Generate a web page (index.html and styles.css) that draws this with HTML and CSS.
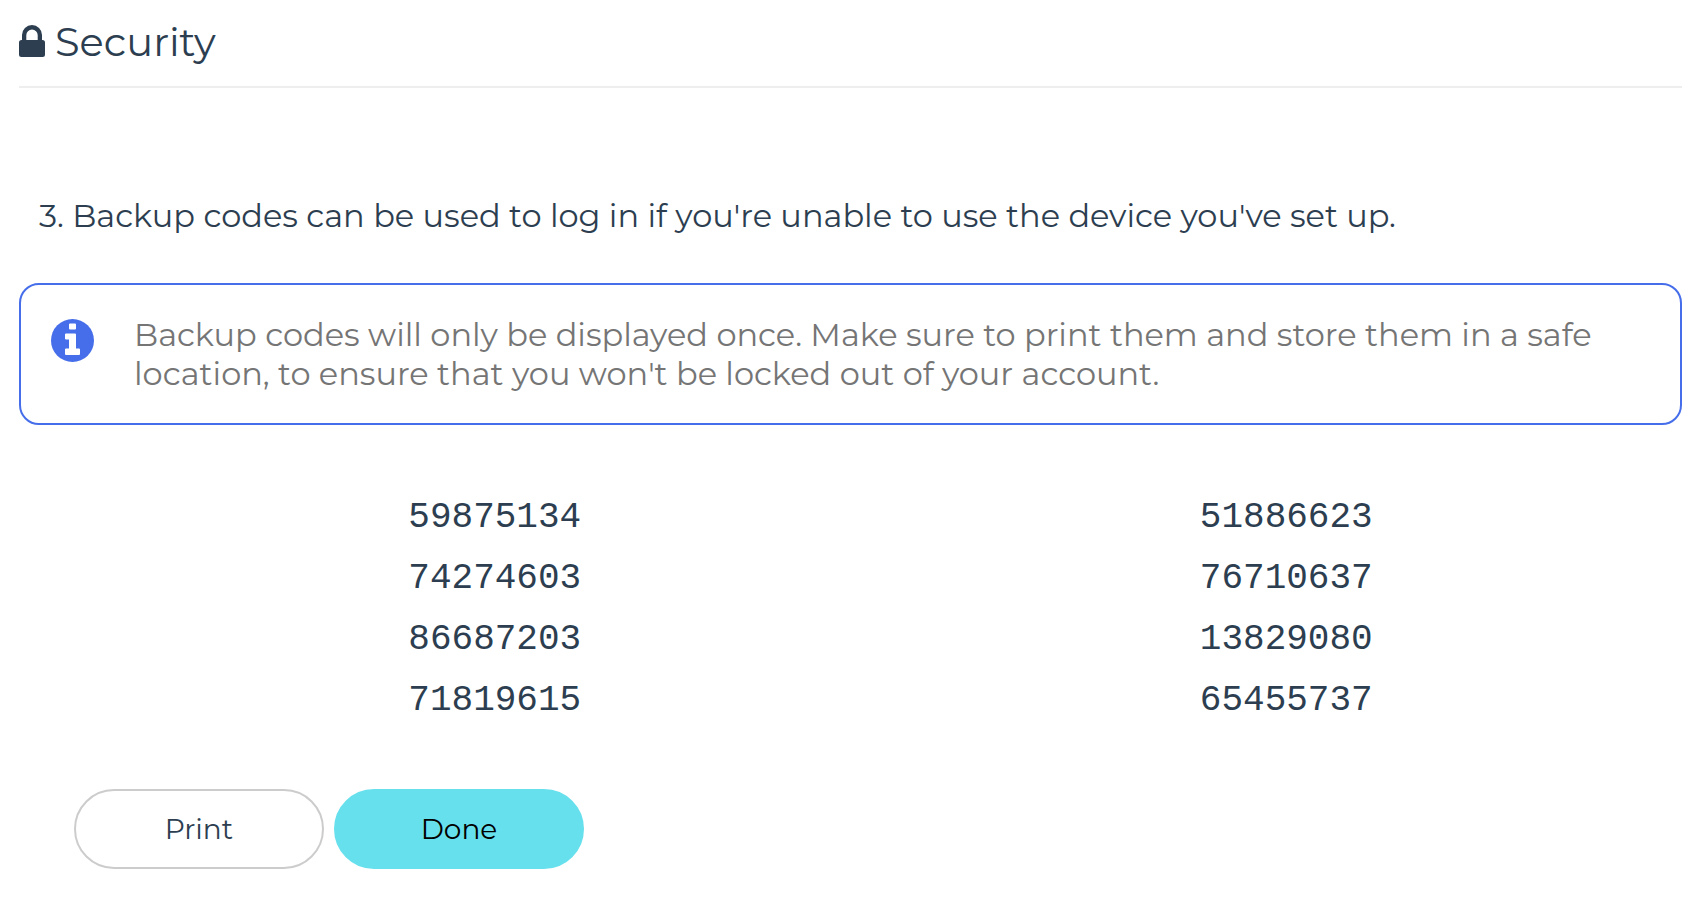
FILE: index.html
```html
<!DOCTYPE html>
<html lang="en">
<head>
<meta charset="utf-8">
<meta name="viewport" content="width=device-width, initial-scale=1">
<title>Security</title>
<link rel="stylesheet" href="styles.css">
</head>
<body>
<main class="page">
  <header class="page-header">
    <svg class="lock-icon" viewBox="0 0 26 32" aria-hidden="true">
      <path d="M3 15V10a10 10 0 0 1 20 0v5h.5A2.500 2.500 0 0 1 26 17.500v12A2.500 2.500 0 0 1 23.500 32h-21A2.500 2.500 0 0 1 0 29.500v-12A2.500 2.500 0 0 1 2.500 15zm4.300 0h11.400v-4.800a5.700 5.700 0 0 0-11.400 0z"/>
    </svg>
    <h1 class="page-title">Security</h1>
  </header>
  <p class="step">3. Backup codes can be used to log in if you're unable to use the device you've set up.</p>
  <section class="notice">
    <svg class="info-icon" viewBox="0 0 43 43" aria-hidden="true">
      <circle class="info-disc" cx="21.500" cy="21.500" r="21.500"/>
      <path class="info-mark" d="M19 4.500h5a1 1 0 0 1 1 1v4a1 1 0 0 1-1 1h-5a1 1 0 0 1-1-1v-4a1 1 0 0 1 1-1zM15 14.500h9a1 1 0 0 1 1 1v14h3a1 1 0 0 1 1 1v4.500a1 1 0 0 1-1 1H15a1 1 0 0 1-1-1v-4.500a1 1 0 0 1 1-1h3v-9h-3a1 1 0 0 1-1-1v-4a1 1 0 0 1 1-1z"/>
    </svg>
    <p class="notice-text">Backup codes will only be displayed once. Make sure to print them and store them in a safe location, to ensure that you won't be locked out of your account.</p>
  </section>
  <ul class="codes">
    <li>59875134</li>
    <li>51886623</li>
    <li>74274603</li>
    <li>76710637</li>
    <li>86687203</li>
    <li>13829080</li>
    <li>71819615</li>
    <li>65455737</li>
  </ul>
  <div class="actions">
    <button class="button" type="button">Print</button>
    <button class="button button-primary" type="button">Done</button>
  </div>
</main>
</body>
</html>
```
FILE: styles.css
```css
* {
  box-sizing: border-box;
}

body {
  margin: 0;
  background: #fff;
  color: #2c3e50;
  font-family: Montserrat, Inter, sans-serif;
  font-size: 32px;
  font-weight: 400;
  line-height: 39px;
}

.page {
  padding: 16px 20px 32px 19px;
}

.page-header {
  display: flex;
  align-items: center;
  gap: 10px;
  padding-bottom: 18px;
  border-bottom: 2px solid #eee;
}

.lock-icon {
  width: 26px;
  height: 32px;
  margin-bottom: 3px;
  fill: #2c3e50;
}

.page-title {
  margin: 0;
  font-size: 40px;
  font-weight: 400;
  line-height: 52px;
}

.step {
  margin: 108px 20px 48px;
}

.notice {
  display: flex;
  align-items: flex-start;
  gap: 40px;
  padding: 30px;
  border: 2px solid #466eea;
  border-radius: 20px;
}

.info-icon {
  flex: none;
  width: 43px;
  height: 43px;
  margin-top: 4px;
}

.info-disc {
  fill: #466eea;
}

.info-mark {
  fill: #fff;
}

.notice-text {
  margin: 0;
  color: #757575;
}

.codes {
  display: grid;
  grid-template-columns: 1fr 1fr;
  margin: 62px 0 0;
  padding: 0 0 0 80px;
  list-style: none;
  font-family: "Liberation Mono", monospace;
  font-size: 36px;
  line-height: 61px;
  text-align: center;
}

.actions {
  display: flex;
  flex-wrap: wrap;
  gap: 10px;
  margin: 58px 55px 0;
}

.button {
  width: 250px;
  height: 80px;
  border: 2px solid #ccc;
  border-radius: 40px;
  background: #fff;
  color: #2c3e50;
  font: inherit;
  font-size: 28px;
}

.button-primary {
  border-color: #67e0ed;
  background: #67e0ed;
  color: #000;
}
```
